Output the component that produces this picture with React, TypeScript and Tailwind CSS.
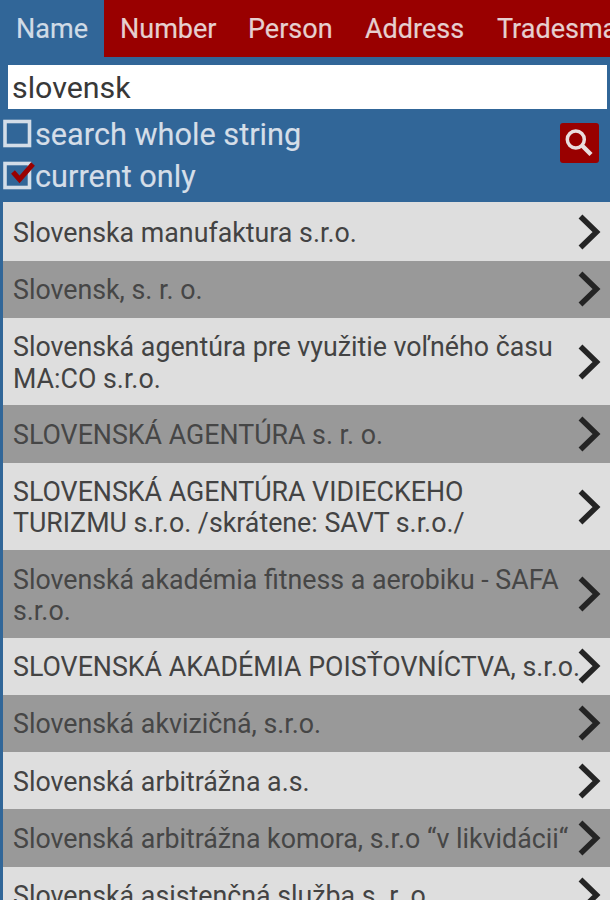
import React, { useState } from "react";

const tabs = [
  { title: "Name", className: "w-[104px] pl-[16px]" },
  { title: "Number", className: "w-[128px] pl-[16px]" },
  { title: "Person", className: "w-[117px] pl-[16px]" },
  { title: "Address", className: "w-[132px] pl-[16px]" },
  { title: "Tradesman", className: "w-[160px] pl-[16px]" },
];

const companies = [
  { lines: ["Slovenska manufaktura s.r.o."] },
  { lines: ["Slovensk, s. r. o."] },
  { lines: ["Slovenská agentúra pre využitie voľného času", "MA:CO s.r.o."] },
  { lines: ["SLOVENSKÁ AGENTÚRA s. r. o."] },
  { lines: ["SLOVENSKÁ AGENTÚRA VIDIECKEHO", "TURIZMU s.r.o. /skrátene: SAVT s.r.o./"] },
  { lines: ["Slovenská akadémia fitness a aerobiku - SAFA", "s.r.o."] },
  { lines: ["SLOVENSKÁ AKADÉMIA POISŤOVNÍCTVA, s.r.o."] },
  { lines: ["Slovenská akvizičná, s.r.o."] },
  { lines: ["Slovenská arbitrážna a.s."] },
  { lines: ["Slovenská arbitrážna komora, s.r.o “v likvidácii“"] },
  { lines: ["Slovenská asistenčná služba s. r. o."] },
];

const CheckOption = ({ label, checked, onChange }: any) => {
  return (
    <button onClick={onChange} className="flex h-[42px] items-center">
      <svg width="32" height="34" viewBox="0 0 32 34" fill="none" className="shrink-0">
        <rect x="2" y="4.5" width="24.5" height="24" stroke="#d3dde8" strokeWidth="3.6" />
        {checked && <path d="M10 13L16.5 20.5L30 5" stroke="#990000" strokeWidth="5" />}
      </svg>
      <span className="pt-[2px] text-[30.7px] leading-[34px] text-[#d5dee8] [-webkit-text-stroke:0.15px]">{label}</span>
    </button>
  );
};

const Chevron = () => {
  return (
    <svg width="24" height="36" viewBox="0 0 24 36" fill="none" className="shrink-0">
      <path d="M2.5 2.5L18.5 18L2.5 33.5" stroke="#242424" strokeWidth="5.5" />
    </svg>
  );
};

const App = () => {
  const [activeTab, setActiveTab] = useState("Name");
  const [query, setQuery] = useState("slovensk");
  const [wholeString, setWholeString] = useState(false);
  const [currentOnly, setCurrentOnly] = useState(true);

  return (
    <div className="flex h-[900px] w-[610px] flex-col overflow-hidden bg-[#316698] font-[Roboto,sans-serif]">
      <div className="flex h-[57px] shrink-0 bg-[#990000]">
        {tabs.map((tab) => (
          <button
            key={tab.title}
            onClick={() => setActiveTab(tab.title)}
            className={`shrink-0 pt-[2px] text-left text-[27px] leading-[55px] [-webkit-text-stroke:0.2px] ${tab.className} ${activeTab === tab.title ? "bg-[#316698] text-[#d0dbe6]" : "text-[#e6cfcf]"}`}
          >
            {tab.title}
          </button>
        ))}
      </div>

      <div className="h-[145px] shrink-0 pt-2">
        <input
          value={query}
          onChange={(e) => setQuery(e.target.value)}
          className="ml-2 block h-[44px] w-[599px] bg-white pt-[2px] pl-[4px] text-[30.4px] text-[#383838] outline-none"
        />
        <div className="flex justify-between">
          <div className="flex flex-col pt-[4px] pl-[3px]">
            <CheckOption label="search whole string" checked={wholeString} onChange={() => setWholeString(!wholeString)} />
            <CheckOption label="current only" checked={currentOnly} onChange={() => setCurrentOnly(!currentOnly)} />
          </div>
          <button className="mt-[14px] mr-[11px] h-[40px] w-[39px] rounded-[3px] bg-[#990000]">
            <svg width="39" height="40" viewBox="0 0 39 40" fill="none">
              <circle cx="15.8" cy="16.5" r="8.5" stroke="#eadede" strokeWidth="3.5" />
              <path d="M21.5 22L31 31.5" stroke="#eadede" strokeWidth="4.4" />
            </svg>
          </button>
        </div>
      </div>

      <div className="ml-[3px]">
        {companies.map((company, idx) => (
          <div
            key={idx}
            className={`flex items-center justify-between pr-[8px] pl-[10px] ${idx === 0 ? "pt-[15.9px]" : "pt-[14.5px]"} ${company.lines.length > 1 ? "pb-[10.5px]" : "pb-[11.6px]"} ${idx % 2 ? "bg-[#999999] text-[#464646]" : "bg-[#dedede] text-[#434343]"}`}
          >
            <div className="text-[26.78px] leading-[31.2px] whitespace-nowrap">
              {company.lines.map((line) => (
                <p key={line}>{line}</p>
              ))}
            </div>
            <div className="-mt-[19px] -mb-4 -ml-6">
              <Chevron />
            </div>
          </div>
        ))}
      </div>
    </div>
  );
};

export default App;
